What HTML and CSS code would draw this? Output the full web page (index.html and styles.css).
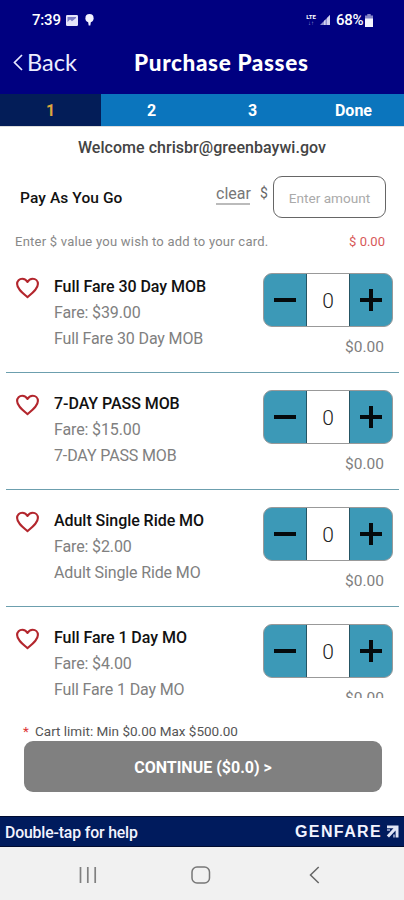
FILE: index.html
```
<!DOCTYPE html>
<html lang="en">
<head>
<meta charset="utf-8">
<title>Purchase Passes</title>
<link rel="stylesheet" href="styles.css">
</head>
<body>
<svg class="defs" width="0" height="0">
  <symbol id="heart" viewBox="0 0 24 22"><path d="M12 20.2 C7 15.8 1.6 11.7 1.6 6.9 C1.6 3.8 3.9 1.7 6.7 1.7 C9 1.7 10.9 2.9 12 5 C13.1 2.9 15 1.7 17.3 1.7 C20.1 1.7 22.4 3.8 22.4 6.9 C22.4 11.7 17 15.8 12 20.2Z" fill="none" stroke="#b3262d" stroke-width="2.1" stroke-linejoin="round"/></symbol>
  <symbol id="minus" viewBox="0 0 24 24"><path d="M1 12H23" stroke="#050a0c" stroke-width="4"/></symbol>
  <symbol id="plus" viewBox="0 0 24 24"><path d="M1 12H23M12 1V23" stroke="#050a0c" stroke-width="4"/></symbol>
</svg>
<header class="header">
  <div class="status">
    <span class="time">7:39</span>
    <svg class="photo" width="12" height="11" viewBox="0 0 12 11"><rect width="12" height="11" rx="1.2" fill="#e4e4fa"/><path d="M1.5 7L4 4.5L6 6.2L10 3V2H1.5Z" fill="#7a7ac6"/></svg>
    <svg class="pin" width="9" height="12" viewBox="0 0 9 12"><circle cx="4.5" cy="4.2" r="4.1" fill="#f2f2ff"/><path d="M3 7H6L5.3 11.5H3.7Z" fill="#f2f2ff"/></svg>
    <span class="lte"><b>LTE</b><i>↓↑</i></span>
    <svg class="signal" width="10" height="10" viewBox="0 0 10 10"><path d="M0 10L10 0V10Z" fill="#9292cf"/><path d="M4 10V6L5.5 4.5V10M7 10V3L10 0V10" fill="#d2d2ee"/></svg>
    <span class="battery-text">68%</span>
    <svg class="battery" width="8" height="13" viewBox="0 0 8 13"><path d="M2.3 0H5.7V1.5H8V13H0V1.5H2.3Z" fill="#8585c7"/><path d="M0 4.5H8V13H0Z" fill="#f4f4ff"/></svg>
  </div>
  <div class="titlebar">
    <svg class="chevron" width="10" height="17" viewBox="0 0 10 17"><path d="M9 1L1.5 8.5L9 16" fill="none" stroke="#e9e9ff" stroke-width="1.7"/></svg>
    <span class="back">Back</span>
    <h1>Purchase Passes</h1>
  </div>
</header>
<nav class="steps"><span class="active">1</span><span>2</span><span>3</span><span>Done</span></nav>
<main>
  <p class="welcome">Welcome chrisbr@greenbaywi.gov</p>
  <div class="payg">
    <strong>Pay As You Go</strong>
    <span class="clear">clear</span><span class="dollar">$</span>
    <div class="amount">Enter amount</div>
  </div>
  <div class="hint"><span class="hint-text">Enter $ value you wish to add to your card.</span><span class="due">$ 0.00</span></div>
  <section class="list">
    <article class="item">
      <svg class="heart"><use href="#heart"/></svg>
      <div class="info"><h2>Full Fare 30 Day MOB</h2><p>Fare: $39.00</p><p>Full Fare 30 Day MOB</p></div>
      <div class="buy"><div class="stepper"><span><svg><use href="#minus"/></svg></span><b>0</b><span><svg><use href="#plus"/></svg></span></div><div class="total">$0.00</div></div>
    </article>
    <article class="item">
      <svg class="heart"><use href="#heart"/></svg>
      <div class="info"><h2>7-DAY PASS MOB</h2><p>Fare: $15.00</p><p>7-DAY PASS MOB</p></div>
      <div class="buy"><div class="stepper"><span><svg><use href="#minus"/></svg></span><b>0</b><span><svg><use href="#plus"/></svg></span></div><div class="total">$0.00</div></div>
    </article>
    <article class="item">
      <svg class="heart"><use href="#heart"/></svg>
      <div class="info"><h2>Adult Single Ride MO</h2><p>Fare: $2.00</p><p>Adult Single Ride MO</p></div>
      <div class="buy"><div class="stepper"><span><svg><use href="#minus"/></svg></span><b>0</b><span><svg><use href="#plus"/></svg></span></div><div class="total">$0.00</div></div>
    </article>
    <article class="item">
      <svg class="heart"><use href="#heart"/></svg>
      <div class="info"><h2>Full Fare 1 Day MO</h2><p>Fare: $4.00</p><p>Full Fare 1 Day MO</p></div>
      <div class="buy"><div class="stepper"><span><svg><use href="#minus"/></svg></span><b>0</b><span><svg><use href="#plus"/></svg></span></div><div class="total">$0.00</div></div>
    </article>
  </section>
  <div class="limit"><em>*</em><span>Cart limit: Min $0.00 Max $500.00</span></div>
  <div class="continue">CONTINUE ($0.0) &gt;</div>
</main>
<footer class="brand">
  <span class="help">Double-tap for help</span>
  <span class="genfare">GENFARE</span>
  <svg class="arrow" width="13" height="13" viewBox="0 0 13 13"><path d="M1 0.5H12.5V12.5H9.6V5.5L3 12.5L0.8 10.4L7.5 3.3H1Z" fill="#dfe4f5"/><path d="M1 5H4M8 9.5V12.5" stroke="#aab6dc" stroke-width="1.6"/></svg>
</footer>
<div class="system">
  <svg width="18" height="18" viewBox="0 0 18 18"><path d="M1.5 1V17M8.8 1V17M16.2 1V17" stroke="#808080" stroke-width="1.7"/></svg>
  <svg width="20" height="18" viewBox="0 0 20 18"><rect x="1" y="1" width="17.5" height="16" rx="5" fill="none" stroke="#777" stroke-width="1.5"/></svg>
  <svg width="11" height="18" viewBox="0 0 11 18"><path d="M9.7 1L1.5 9L9.7 17" fill="none" stroke="#666" stroke-width="1.5"/></svg>
</div>
</body>
</html>
```
FILE: styles.css
```
* { box-sizing: border-box; margin: 0; padding: 0; }
body { width: 404px; height: 900px; overflow: hidden; background: #fff; font-family: Roboto, sans-serif; color: #111; white-space: nowrap; }
.defs { position: absolute; }
svg { display: block; flex: none; }
.header { height: 94px; background: #000080; color: #fff; }
.status { height: 40px; display: flex; align-items: center; padding-left: 32px; }
.time { width: 34px; font-size: 15px; font-weight: 500; letter-spacing: -0.2px; }
.pin { margin-left: 7px; }
.lte { width: 12px; margin-left: 211px; font-size: 6px; line-height: 6px; text-align: center; }
.lte b, .lte i { display: block; font-style: normal; }
.lte i { color: #9797d0; }
.signal { margin-left: 3px; }
.battery-text { width: 28px; margin-left: 6px; font-size: 15px; font-weight: 500; letter-spacing: -0.3px; }
.battery { margin-left: 1px; }
.titlebar { height: 44px; display: flex; align-items: center; padding-left: 13px; }
.back { width: 107px; margin-left: 4px; font: 23.5px Lato, sans-serif; color: #ececff; }
h1 { font: 900 22.5px Lato, sans-serif; letter-spacing: 0.65px; }
.steps { height: 33px; display: grid; grid-template-columns: repeat(4, 1fr); grid-template-rows: 32px; background: #0b75bd; color: #fff; font-size: 16px; font-weight: 700; line-height: 34px; text-align: center; border-bottom: 1px solid #ddd; }
.steps .active { background: #031d58; color: #dba53e; }
.welcome { height: 42px; line-height: 42px; text-align: center; font-size: 16px; font-weight: 500; color: #444; letter-spacing: 0.04px; }
.payg { height: 57px; display: flex; align-items: flex-start; padding: 7px 0 0 20px; }
.payg strong { width: 196px; font-size: 15.5px; font-weight: 500; line-height: 44px; letter-spacing: 0.1px; }
.clear { width: 34px; height: 29px; font-size: 16px; line-height: 36px; color: #777; border-bottom: 2px solid #bbb; }
.dollar { width: 13px; margin-left: 10px; font-size: 14px; line-height: 34px; color: #666; }
.amount { width: 113px; height: 42px; border: 1.4px solid #666; border-radius: 9px; text-align: center; line-height: 42px; font-size: 13.6px; color: #aaa; }
.hint { height: 30px; display: flex; justify-content: space-between; padding: 0 19px 0 15px; font-size: 13px; line-height: 32px; color: #888; }
.hint-text { letter-spacing: 0.24px; }
.due { color: #d75959; }
.list { height: 442px; padding: 0 5px 0 6px; overflow: hidden; }
.item { height: 117px; display: flex; padding: 17px 0 0 9px; border-bottom: 1px solid #6c9fae; }
.heart { width: 25px; height: 22px; margin-top: 4px; }
.info { width: 209px; margin-left: 14px; padding-top: 1px; line-height: 26px; font-size: 16px; letter-spacing: -0.13px; color: #808080; }
h2 { font-size: 16px; font-weight: 500; letter-spacing: -0.05px; color: #111; }
.buy { width: 130px; }
.stepper { height: 54px; display: grid; grid-template-columns: 42px 1fr 42px; border: 1px solid #999; border-radius: 9px; overflow: hidden; text-align: center; background: #3c99b7; }
.stepper span { display: grid; place-items: center; padding-bottom: 2px; }
.stepper svg { width: 24px; height: 24px; }
.stepper b { background: #fff; border: solid #255564; border-width: 0 1px; font-size: 21px; font-weight: 300; line-height: 54px; color: #222; }
.total { padding: 7px 9px 0 0; font-size: 15.5px; line-height: 26px; text-align: right; color: #808080; }
.limit { height: 43px; display: flex; align-items: flex-end; padding-left: 23px; font-size: 13.5px; line-height: 20px; color: #555; }
.limit em { width: 12px; font-style: normal; color: #d33; }
.continue { width: 358px; height: 51px; margin-left: 24px; border-radius: 9px; background: #808080; color: #fff; text-align: center; font-size: 16px; font-weight: 700; line-height: 54px; }
.brand { height: 31px; margin-top: 24px; display: flex; align-items: center; padding-left: 5px; background: #001b5d; border: solid #000b30; border-width: 1px 0; color: #f2f4ff; }
.help { width: 290px; padding-top: 1px; font-size: 15.8px; font-weight: 500; letter-spacing: -0.15px; }
.genfare { width: 91px; font: 700 16px "Liberation Sans", sans-serif; letter-spacing: 1.4px; }
.system { height: 53px; display: flex; align-items: center; padding: 3px 0 0 79px; background: #f1f1f1; gap: 94px; }
.system svg:last-child { margin-left: 4px; }
```
